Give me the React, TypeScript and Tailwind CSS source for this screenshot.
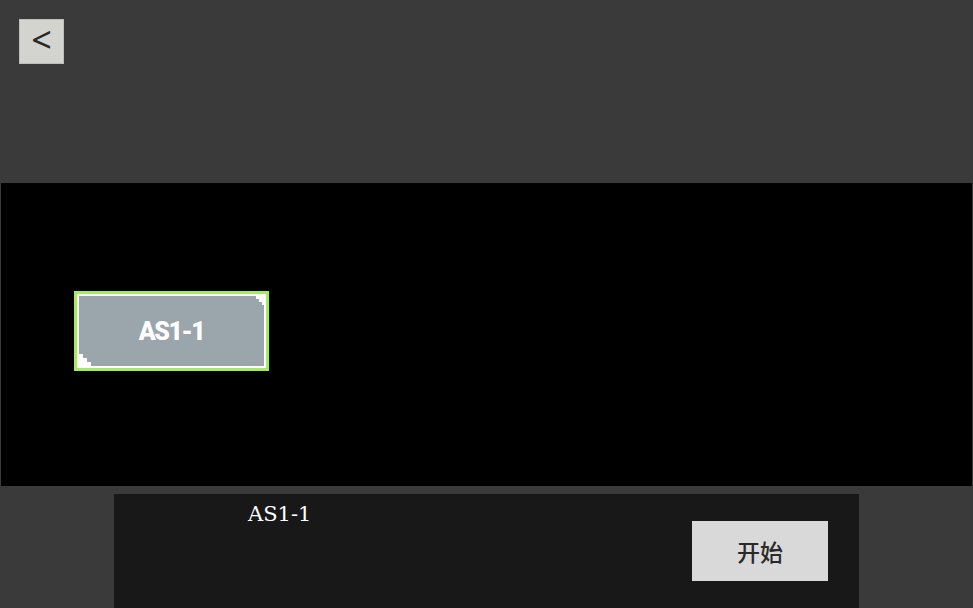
import React from "react";

export default function App() {
  return (
    <div className="w-[973px] h-[608px] bg-[#3a3a3a] flex flex-col overflow-hidden" style={{ fontFamily: '"Noto Sans", sans-serif' }}>
      <div className="h-[183px] shrink-0 pt-[19px] pl-[19px]">
        <button className="w-[45px] h-[45px] bg-[#d3d3cf] border border-[#bdbdb9] flex items-center justify-center text-[#2a2a2a] text-[36px] leading-none pb-[4px]" style={{ fontFamily: '"Noto Sans", sans-serif' }}>
          &lt;
        </button>
      </div>
      <div className="h-[303px] shrink-0 mx-[1px] bg-black pt-[108px] pl-[73px]">
        <div className="relative w-[195px] h-[80px] border-[3px] border-[#a6ea63] bg-white p-[2px]">
          <div className="relative w-full h-full bg-[#9ba6ac] flex items-center justify-center">
            <span className="text-white text-[25px] font-black tracking-[-1.5px] leading-none" style={{ fontFamily: 'Roboto, "DejaVu Sans", sans-serif' }}>AS1-1</span>
            <div className="absolute top-0 right-0 w-[8px] h-[3px] bg-white" />
            <div className="absolute top-[3px] right-0 w-[5px] h-[3px] bg-white" />
            <div className="absolute top-[6px] right-0 w-[2px] h-[3px] bg-white" />
            <div className="absolute bottom-0 left-0 w-[12px] h-[4px] bg-white" />
            <div className="absolute bottom-[4px] left-0 w-[8px] h-[4px] bg-white" />
            <div className="absolute bottom-[8px] left-0 w-[4px] h-[4px] bg-white" />
          </div>
        </div>
      </div>
      <div className="h-[8px] shrink-0" />
      <div className="ml-[114px] w-[745px] flex-1 bg-[#181818] relative flex">
        <div className="pl-[134px] pt-[7px] text-[21px] leading-[26px] text-white" style={{ fontFamily: '"DejaVu Serif", serif' }}>
          AS1-1
        </div>
        <div className="ml-auto mr-[31px] mt-[27px]">
          <button className="w-[136px] h-[60px] bg-[#d9d9d9] text-[#2a2a2a] text-[23px] font-medium flex items-center justify-center" style={{ fontFamily: '"Noto Sans CJK SC", sans-serif' }}>
            开始
          </button>
        </div>
      </div>
    </div>
  );
}
